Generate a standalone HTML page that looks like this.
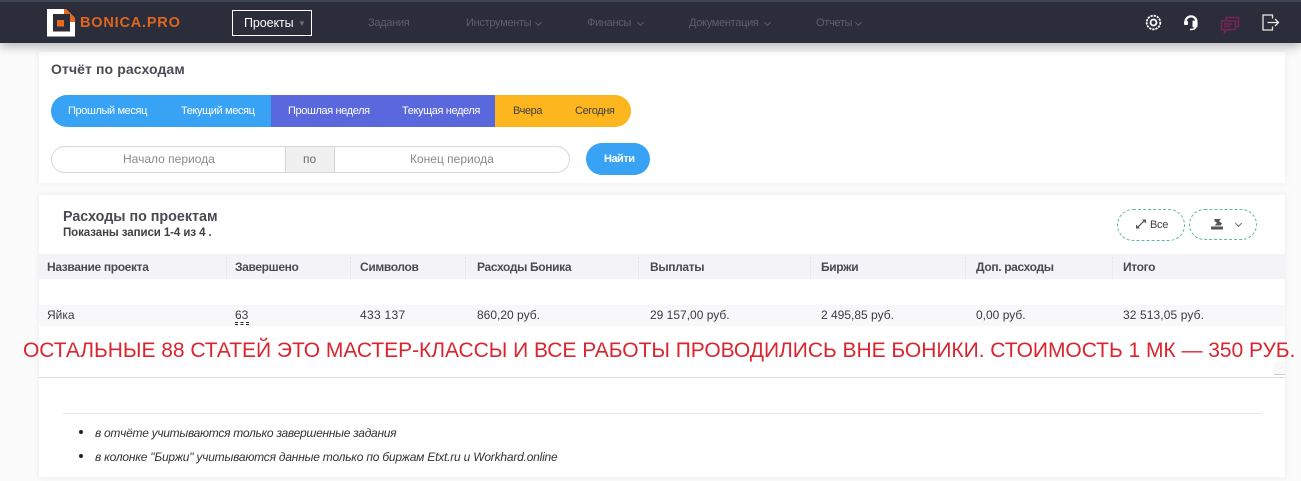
<!DOCTYPE html>
<html lang="ru"><head><meta charset="utf-8"><title>Отчёт по расходам</title>
<style>
*{box-sizing:border-box}
html,body{margin:0;padding:0;width:1301px;height:481px;overflow:hidden;background:#fbfbfb;font-family:"Liberation Sans","Noto Sans CJK JP",sans-serif;color:#3f3f45}
.a{position:absolute}
.t{position:absolute;white-space:nowrap;line-height:16px;font-size:12px}
.card{position:absolute;background:#fff;box-shadow:0 0 7px rgba(60,60,80,.08)}
.nav{color:#5d5f6b;font-size:11px;top:15px;letter-spacing:-.3px}
.b{color:#fff;font-size:11px;top:103px;letter-spacing:-.38px}
.th{font-weight:bold;font-size:12px;top:259px;color:#4a4a52;letter-spacing:-.35px}
.td{font-size:12px;top:307px;color:#3a3a40}
.chev{position:absolute;width:5px;height:5px;border-right:1px solid #5d5f6b;border-bottom:1px solid #5d5f6b;transform:rotate(45deg)}
.sep{position:absolute;top:257px;height:22px;border-left:1px dotted #e2e2e8}
</style></head><body>

<!-- card 1 -->
<div class="card" style="left:39px;top:52px;width:1246px;height:131px"></div>

<div class="a" style="left:0;top:0;width:1301px;height:43px;background:#2b2d3a;box-shadow:0 3px 10px rgba(40,40,50,.35)"></div>
<div class="a" style="left:0;top:0;width:1301px;height:2px;background:#3c4654"></div>

<svg class="a" style="left:47px;top:9px" width="28" height="28" viewBox="0 0 28 28">
<path d="M0 0H19L28 9V27.500H0Z" fill="#fff"/>
<path d="M17 0H19L28 9V13H23V5H17Z" fill="#e8681e"/>
<path d="M6 5H23V22.500H6Z" fill="#2b2d3a"/>
<path d="M10 11H17V17.500H10Z" fill="#e8681e"/>
</svg>
<div class="t" style="left:80px;top:13px;font-size:14.500px;font-weight:bold;color:#e0651e;letter-spacing:.8px;line-height:20px">BONICA.PRO</div>

<div class="a" style="left:232px;top:10px;width:80px;height:26px;border:1px solid #fff"></div>
<div class="t" style="left:244px;top:15px;color:#fff;font-size:12.500px;letter-spacing:-.1px">Проекты</div>
<div class="t" style="left:298px;top:16px;color:#6c6e78;font-size:8px">▼</div>

<div class="t nav" style="left:368px">Задания</div>
<div class="t nav" style="left:466px">Инструменты</div><div class="chev" style="left:536px;top:20px"></div>
<div class="t nav" style="left:587px">Финансы</div><div class="chev" style="left:638px;top:20px"></div>
<div class="t nav" style="left:689px">Документация</div><div class="chev" style="left:765px;top:20px"></div>
<div class="t nav" style="left:816px">Отчеты</div><div class="chev" style="left:856px;top:20px"></div>

<svg class="a" style="left:1145px;top:14px" width="17" height="17" viewBox="0 0 17 17" fill="none" stroke="#fff">
<circle cx="8.500" cy="8.500" r="6.800" stroke-width="1.800" stroke-dasharray="2.200 1"/>
<circle cx="8.500" cy="8.500" r="3" stroke-width="1.800"/>
</svg>
<svg class="a" style="left:1183px;top:15px" width="16" height="16" viewBox="0 0 16 16" fill="none" stroke="#fff">
<path d="M2.500 9V6.800a5.500 5.500 0 0 1 11 0V10" stroke-width="2.200"/>
<rect x="1" y="6" width="4" height="4" rx="1" fill="#fff" stroke="none"/>
<rect x="9.500" y="5.500" width="5" height="7" rx="1" fill="#fff" stroke="none"/>
<path d="M12.500 12c0 2-2.500 2.500-5.500 2.500" stroke-width="1.500"/>
</svg>
<svg class="a" style="left:1220px;top:16px" width="20" height="19" viewBox="0 0 20 19" fill="none" stroke="#7a2458" stroke-width="1.500">
<path d="M6 4V1.500H18.500V10.500H16"/>
<path d="M1.500 5H15.500V13.500H7L4.500 16.500V13.500H1.500Z"/>
<path d="M4 8H12M4 10.500H10"/>
</svg>
<svg class="a" style="left:1262px;top:14px" width="18" height="17" viewBox="0 0 18 17" fill="none" stroke="#e8e8e0" stroke-width="1.300">
<path d="M10.500 4.500V1H1V16H10.500V12.500"/>
<path d="M5.500 8.500H16.500M13 5l3.500 3.500L13 12"/>
</svg>

<div class="t" style="left:51px;top:61px;font-size:14px;font-weight:bold;color:#4a4a52;letter-spacing:.1px">Отчёт по расходам</div>

<div class="a" style="left:51px;top:95px;width:220px;height:32px;background:#38a2f5;border-radius:16px 0 0 16px"></div>
<div class="a" style="left:271px;top:95px;width:224px;height:32px;background:#5a68dd"></div>
<div class="a" style="left:495px;top:95px;width:136px;height:32px;background:#fdb61e;border-radius:0 16px 16px 0"></div>
<div class="t b" style="left:68px">Прошлый месяц</div>
<div class="t b" style="left:181px">Текущий месяц</div>
<div class="t b" style="left:288px">Прошлая неделя</div>
<div class="t b" style="left:402px">Текущая неделя</div>
<div class="t b" style="left:513px;color:#3f3f45">Вчера</div>
<div class="t b" style="left:575px;color:#3f3f45">Сегодня</div>

<div class="a" style="left:51px;top:146px;width:519px;height:27px;border:1px solid #d6d6d6;border-radius:14px"></div>
<div class="a" style="left:285px;top:146px;width:50px;height:27px;background:#f0f0f0;border:1px solid #d6d6d6"></div>
<div class="t" style="left:123px;top:151px;color:#8a8a8a">Начало периода</div>
<div class="t" style="left:303px;top:151px;color:#6a6a6a">по</div>
<div class="t" style="left:410px;top:151px;color:#8a8a8a">Конец периода</div>
<div class="a" style="left:586px;top:143px;width:64px;height:32px;background:#38a2f5;border-radius:16px"></div>
<div class="t" style="left:604px;top:151px;color:#fff;font-size:11px;font-weight:bold;letter-spacing:-.5px">Найти</div>

<!-- card 2 -->
<div class="card" style="left:39px;top:195px;width:1246px;height:282px"></div>
<div class="t" style="left:63px;top:209px;font-size:14.300px;font-weight:bold;color:#4a4a52">Расходы по проектам</div>
<div class="t" style="left:63px;top:225px;font-size:11.500px;font-weight:bold;color:#3f3f45;letter-spacing:-.08px">Показаны записи 1-4 из 4 .</div>

<div class="a" style="left:1117px;top:209px;width:68px;height:32px;border:1px dashed #5fb8a6;border-radius:16px"></div>
<div class="a" style="left:1189px;top:209px;width:68px;height:31px;border:1px dashed #5fb8a6;border-radius:16px"></div>
<svg class="a" style="left:1135px;top:218px" width="12" height="12" viewBox="0 0 12 12" fill="#555" stroke="#555">
<path d="M2.500 9.500L9.500 2.500" stroke-width="1.200"/><path d="M7 1.500H11V5.500Z" stroke="none"/><path d="M1 6.500V10.500H5Z" stroke="none"/>
</svg>
<div class="t" style="left:1150px;top:217px;font-size:11px;color:#3f3f45;letter-spacing:-.3px">Все</div>
<svg class="a" style="left:1211px;top:218px" width="12" height="12" viewBox="0 0 12 12" fill="#555">
<rect x="0" y="8.500" width="12" height="3"/><path d="M3.500 1H10L8 3L11 5.500L9.500 7.500H3.500L6 5L3.500 3Z"/>
</svg>
<div class="a" style="left:1236px;top:221px;width:5px;height:5px;border-right:1px solid #666;border-bottom:1px solid #666;transform:rotate(45deg)"></div>

<div class="a" style="left:39px;top:254px;width:1246px;height:25px;background:#f3f3f8"></div>
<div class="a" style="left:39px;top:305px;width:1246px;height:21px;background:#f8f8fb"></div>

<div class="sep" style="left:226px"></div><div class="sep" style="left:350px"></div><div class="sep" style="left:465px"></div><div class="sep" style="left:638px"></div><div class="sep" style="left:810px"></div><div class="sep" style="left:965px"></div><div class="sep" style="left:1112px"></div>

<div class="t th" style="left:47px">Название проекта</div>
<div class="t th" style="left:235px">Завершено</div>
<div class="t th" style="left:360px">Символов</div>
<div class="t th" style="left:477px">Расходы Боника</div>
<div class="t th" style="left:650px">Выплаты</div>
<div class="t th" style="left:821px">Биржи</div>
<div class="t th" style="left:976px">Доп. расходы</div>
<div class="t th" style="left:1123px">Итого</div>

<div class="t td" style="left:47px">Яйка</div>
<div class="t td" style="left:235px">63</div>
<div class="a" style="left:235px;top:322px;width:14px;border-top:1px dashed #222"></div>
<div class="a" style="left:235px;top:324px;width:14px;border-top:1px dashed #222"></div>
<div class="t td" style="left:360px;letter-spacing:.3px">433 137</div>
<div class="t td" style="left:477px">860,20 руб.</div>
<div class="t td" style="left:650px">29 157,00 руб.</div>
<div class="t td" style="left:821px">2 495,85 руб.</div>
<div class="t td" style="left:976px">0,00 руб.</div>
<div class="t td" style="left:1123px;letter-spacing:.1px">32 513,05 руб.</div>

<div class="a" style="left:39px;top:326px;width:1246px;height:51px;background:#fff"></div>
<div class="a" style="left:39px;top:377px;width:1246px;height:1px;background:#dcdcdc"></div>
<div class="a" style="left:1274px;top:362px;width:11px;height:13px;background:#f8f8f8;border-bottom:1px solid #ccc"></div>
<div class="t" style="left:23px;top:339px;font-size:21px;line-height:24px;color:#d9252e;letter-spacing:-.03px">ОСТАЛЬНЫЕ 88 СТАТЕЙ ЭТО МАСТЕР-КЛАССЫ И ВСЕ РАБОТЫ ПРОВОДИЛИСЬ ВНЕ БОНИКИ. СТОИМОСТЬ 1 МК — 350 РУБ.</div>

<div class="a" style="left:63px;top:413px;width:1199px;height:1px;background:#e6e6e6"></div>
<div class="a" style="left:79px;top:430px;width:4px;height:4px;border-radius:50%;background:#222"></div>
<div class="a" style="left:79px;top:454px;width:4px;height:4px;border-radius:50%;background:#222"></div>
<div class="t" style="left:95px;top:425px;font-size:12px;font-style:italic;color:#333;letter-spacing:-.28px">в отчёте учитываются только завершенные задания</div>
<div class="t" style="left:95px;top:449px;font-size:12px;font-style:italic;color:#333;letter-spacing:-.21px">в колонке "Биржи" учитываются данные только по биржам Etxt.ru и Workhard.online</div>

</body></html>
